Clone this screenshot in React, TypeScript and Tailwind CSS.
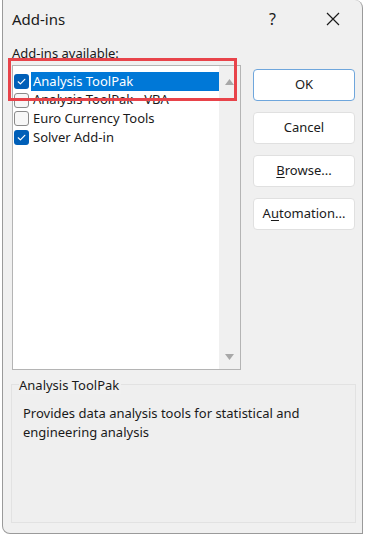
import React from 'react';

const FONT = '"Noto Sans", "Open Sans", Arial, sans-serif';

const ITEMS = [
  { label: 'Analysis ToolPak', checked: true, selected: true },
  { label: 'Analysis ToolPak - VBA', checked: false, selected: false },
  { label: 'Euro Currency Tools', checked: false, selected: false },
  { label: 'Solver Add-in', checked: true, selected: false },
];

function Check({ checked }: { checked: boolean }) {
  if (checked) {
    return (
      <span className="flex h-[15px] w-[15px] shrink-0 items-center justify-center rounded-[3px] bg-[#005fb8]">
        <svg width="11" height="11" viewBox="0 0 11 11" fill="none">
          <path d="M2.2 5.8 L4.4 7.9 L8.8 3.3" stroke="white" strokeWidth="1.2" strokeLinecap="round" strokeLinejoin="round" />
        </svg>
      </span>
    );
  }
  return <span className="h-[15px] w-[15px] shrink-0 rounded-[3px] border border-[#8a8a8a] bg-[#f7f7f7]" />;
}

function Btn({ children, primary }: { children: React.ReactNode; primary?: boolean }) {
  return (
    <div
      className={`flex h-[32px] w-[102px] items-center justify-center rounded-[4px] bg-white text-[13px] text-[#1a1a1a] ${
        primary ? 'border border-[#6fa6dc]' : 'border border-[#e0e0e0]'
      }`}
    >
      {children}
    </div>
  );
}

export default function App() {
  return (
    <div className="h-[536px] w-[365px] overflow-hidden bg-white" style={{ fontFamily: FONT }}>
      <div className="ml-[2px] flex h-[534px] w-[361px] flex-col rounded-tr-[8px] rounded-bl-[8px] border-r border-b border-l border-[#9a9a9a] bg-[#f0f0f0]">
        {/* title bar */}
        <div className="flex h-[38px] items-center pl-[9px] text-[15px] text-[#1a1a1a]">
          <span className="flex-1">Add-ins</span>
          <span className="mr-[50px] text-[16px]">?</span>
          <svg className="mr-[22px]" width="14" height="14" viewBox="0 0 14 14">
            <path d="M1 1 L13 13 M13 1 L1 13" stroke="#1a1a1a" strokeWidth="1.2" />
          </svg>
        </div>

        <div className="flex pl-[9px] pr-[6px]">
          {/* left column */}
          <div className="relative flex w-[229px] flex-col">
            <div className="h-[27px] pt-[6px] text-[13px] leading-[18px] text-[#1a1a1a]">
              <span className="underline underline-offset-2">A</span>dd-ins available:
            </div>
            <div className="flex h-[305px] border border-[#b4b4b4] bg-white">
              <div className="flex flex-1 flex-col pt-[6px]">
                {ITEMS.map((it) => (
                  <div key={it.label} className="flex h-[18.7px] items-center gap-[2px] pl-[1px]">
                    <Check checked={it.checked} />
                    <span
                      className={`flex h-[18.7px] flex-1 items-center pl-[2px] text-[13px] ${
                        it.selected ? 'bg-[#0078d7] text-white' : 'text-[#1a1a1a]'
                      }`}
                    >
                      {it.label}
                    </span>
                  </div>
                ))}
              </div>
              <div className="flex w-[21px] flex-col items-center justify-between bg-[#f0f0f0] pt-[13px] pb-[9px]">
                <svg width="9" height="6" viewBox="0 0 9 6">
                  <path d="M0 6 L4.5 0 L9 6 Z" fill="#a8a8a8" />
                </svg>
                <svg width="9" height="6" viewBox="0 0 9 6">
                  <path d="M0 0 L4.5 6 L9 0 Z" fill="#a8a8a8" />
                </svg>
              </div>
            </div>
            {/* annotation highlight */}
            <div className="pointer-events-none absolute top-[20px] left-[-4px] h-[43px] w-[229px] border-[3px] border-[#e8434a]" />
          </div>

          {/* buttons */}
          <div className="ml-[12px] flex flex-col gap-[11px] pt-[31px]">
            <Btn primary>OK</Btn>
            <Btn>Cancel</Btn>
            <Btn>
              <span className="underline underline-offset-2">B</span>rowse...
            </Btn>
            <Btn>
              A<span className="underline underline-offset-2">u</span>tomation...
            </Btn>
          </div>
        </div>

        {/* description group */}
        <div className="relative mt-[14px] mr-[6px] ml-[8px] h-[139px] border border-[#e2e2e2] bg-[#efefef]">
          <div className="absolute top-[-9px] left-[7px] bg-[#f0f0f0] pr-[2px] text-[13px] leading-[18px] text-[#1a1a1a]">
            Analysis ToolPak
          </div>
          <div className="pt-[19px] pl-[11px] text-[13px] leading-[19px] text-[#1a1a1a]">
            Provides data analysis tools for statistical and
            <br />
            engineering analysis
          </div>
        </div>
      </div>
    </div>
  );
}
